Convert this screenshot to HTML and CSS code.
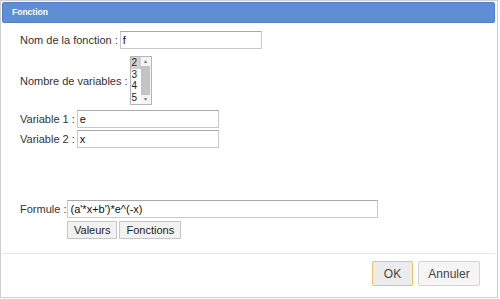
FILE: index.html
```html
<!DOCTYPE html>
<html lang="fr">
<head>
    <meta charset="UTF-8">
    <title>Fonction</title>
    <link rel="stylesheet" href="styles.css">
</head>
<body>

    <div class="dialog">
        <!-- Titre -->
        <div class="dialog-header">Fonction</div>

        <div class="dialog-body">
            <div class="row row-name">
                <label>Nom de la fonction :</label>
                <input class="field field-name" type="text" value="f">
            </div>

            <div class="row row-count">
                <label>Nombre de variables :</label>
                <div class="listbox">
                    <div class="options">
                        <span class="selected">2</span>
                        <span>3</span>
                        <span>4</span>
                        <span>5</span>
                    </div>
                    <div class="scrollbar">
                        <span class="arrow">&#9652;</span>
                        <span class="thumb"></span>
                        <span class="arrow">&#9662;</span>
                    </div>
                </div>
            </div>

            <div class="row row-var">
                <label>Variable 1 :</label>
                <input class="field field-var" type="text" value="e">
            </div>
            <div class="row row-var">
                <label>Variable 2 :</label>
                <input class="field field-var" type="text" value="x">
            </div>

            <div class="row row-formula">
                <label>Formule :</label>
                <input class="field field-formula" type="text" value="(a'*x+b')*e^(-x)">
            </div>
            <div class="formula-tools">
                <button class="small-button">Valeurs</button>
                <button class="small-button">Fonctions</button>
            </div>
        </div>

        <!-- Boutons du bas -->
        <div class="dialog-footer">
            <button class="footer-button ok">OK</button>
            <button class="footer-button">Annuler</button>
        </div>
    </div>

</body>
</html>
```

FILE: styles.css
```css
body {
    margin: 0;
    padding: 0;
    background-color: white;
    font-family: "Liberation Sans", Arial, sans-serif;
    color: #333;
}

.dialog {
    width: 498px;
    height: 298px;
    box-sizing: border-box;
    border: 1px solid #cfcfcf;
    padding: 1px;
    display: flex;
    flex-direction: column;
}

.dialog-header {
    height: 19px;
    margin-right: 1px;
    border: 1px solid #4f80c8;
    border-radius: 2px;
    background-color: #5e8ed3;
    color: white;
    font-size: 8.5px;
    font-weight: bold;
    line-height: 19px;
    padding-left: 9px;
}

.dialog-body {
    flex: 1;
    padding: 8px 0 0 18px;
    font-size: 11px;
}

.row {
    display: flex;
    align-items: center;
}

.row label {
    margin-right: 2px;
}

.field {
    box-sizing: border-box;
    height: 18px;
    border: 1px solid #c9c9c9;
    border-top-color: #a9a9a9;
    padding: 0 2px;
    font-family: "Liberation Sans", Arial, sans-serif;
    font-size: 11px;
    color: #111;
    outline: none;
}

.field-name {
    width: 142px;
}

.row-count {
    margin-top: 7px;
}

.listbox {
    display: flex;
    width: 22px;
    height: 49px;
    box-sizing: border-box;
    border: 1px solid #b5b5b5;
    background: white;
}

.options {
    display: flex;
    flex-direction: column;
    width: 10px;
    font-size: 10px;
    line-height: 11.5px;
    color: #222;
}

.options span {
    padding-left: 1px;
}

.options .selected {
    background-color: #cfcfcf;
}

.scrollbar {
    flex: 1;
    display: flex;
    flex-direction: column;
    align-items: center;
    background: #f4f4f4;
}

.scrollbar .arrow {
    font-size: 6px;
    line-height: 9px;
    color: #777;
}

.scrollbar .thumb {
    flex: 1;
    width: 9px;
    background-color: #c4c4c4;
}

.row-var {
    margin-top: 2px;
}

.row-count + .row-var {
    margin-top: 5px;
}

.field-var {
    width: 142px;
}

.row-formula {
    margin-top: 52px;
}

.row-formula label {
    margin-right: 1px;
}

.field-formula {
    width: 311px;
}

.formula-tools {
    display: flex;
    gap: 2px;
    margin: 3px 0 0 47px;
}

.small-button {
    height: 18px;
    padding: 0 6px;
    border: 1px solid #c6c6c6;
    background-color: #f2f2f2;
    font-family: "Liberation Sans", Arial, sans-serif;
    font-size: 11px;
    color: #222;
}

.dialog-footer {
    display: flex;
    justify-content: flex-end;
    gap: 5px;
    margin-right: 1px;
    padding: 7px 15px 10px 0;
    border-top: 1px solid #e6e6e6;
}

.footer-button {
    width: 62px;
    height: 25px;
    padding: 0;
    border: 1px solid #d4d4d4;
    border-radius: 2px;
    background-color: #f5f5f5;
    font-family: "Liberation Sans", Arial, sans-serif;
    font-size: 12px;
    color: #444;
}

.footer-button.ok {
    width: 41px;
    border-color: #efc06a;
    background-color: #ececec;
}
```
